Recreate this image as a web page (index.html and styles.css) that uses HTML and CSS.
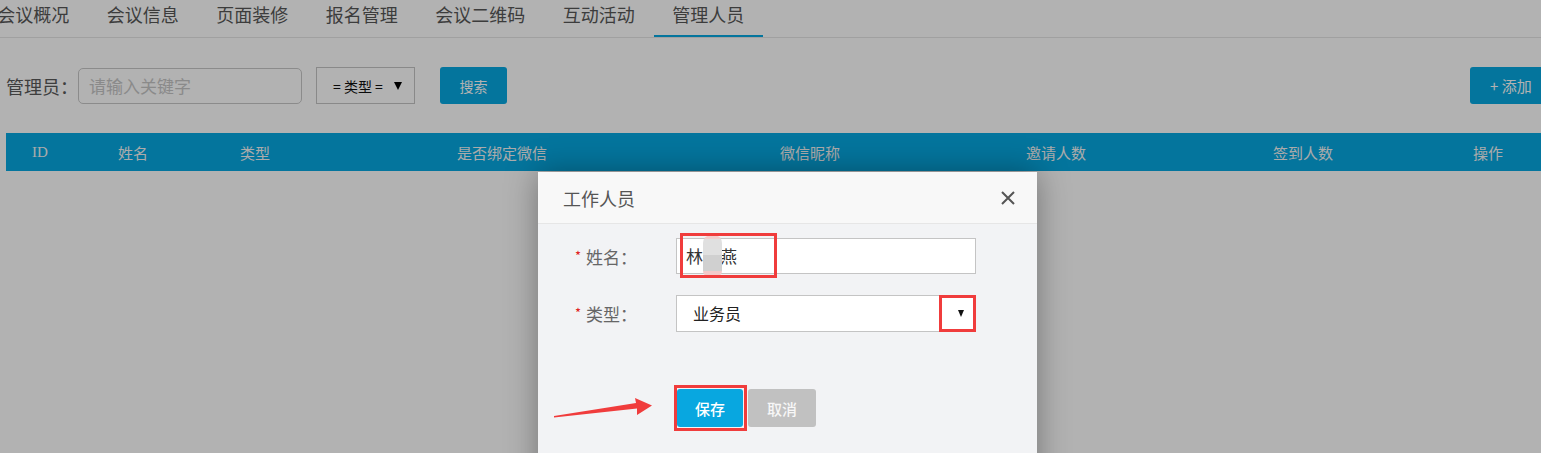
FILE: index.html
```html
<!DOCTYPE html>
<html lang="zh-CN">
<head>
<meta charset="utf-8">
<title>管理人员</title>
<link rel="stylesheet" href="styles.css">
</head>
<body>
<div class="page">
  <div class="tabbar">
    <nav class="tabs">
      <span class="tab">会议概况</span>
      <span class="tab">会议信息</span>
      <span class="tab">页面装修</span>
      <span class="tab">报名管理</span>
      <span class="tab">会议二维码</span>
      <span class="tab">互动活动</span>
      <span class="tab active">管理人员</span>
    </nav>
  </div>
  <div class="toolbar">
    <span class="tb-label">管理员：</span>
    <div class="tb-input">请输入关键字</div>
    <div class="tb-select">= 类型 = <span class="tb-caret"></span></div>
    <button class="btn-search">搜索</button>
    <button class="btn-add">+ 添加</button>
  </div>
  <div class="thead">
    <span class="th-id">ID</span>
    <span>姓名</span>
    <span>类型</span>
    <span>是否绑定微信</span>
    <span>微信昵称</span>
    <span>邀请人数</span>
    <span>签到人数</span>
    <span>操作</span>
  </div>
</div>
<div class="mask"></div>
<div class="modal">
  <div class="modal-head">
    <span class="modal-title">工作人员</span>
    <svg class="modal-close" width="14" height="14" viewBox="0 0 14 14"><path d="M1 1L13 13M13 1L1 13" stroke="#555" stroke-width="2" fill="none"/></svg>
  </div>
  <div class="modal-body">
    <div class="form-row">
      <label class="form-label"><i class="req">*</i>姓名：</label>
      <div class="field field-text">林<span class="gap"></span>燕<span class="blob"></span><span class="mark mark-name"></span></div>
    </div>
    <div class="form-row">
      <label class="form-label"><i class="req">*</i>类型：</label>
      <div class="field field-select">业务员<span class="mark mark-caret"><span class="sel-caret"></span></span></div>
    </div>
    <div class="actions">
      <span class="save-mark"><button class="btn-save">保存</button></span>
      <button class="btn-cancel">取消</button>
    </div>
  </div>
</div>
<svg class="pointer" width="106" height="28" viewBox="0 0 106 28"><polygon points="4,23 86,10 85,5 102,12.5 87,22 87,15.5 4,24.5" fill="#f03c3c"/></svg>
</body>
</html>
```
FILE: styles.css
```css
html, body {
  margin: 0;
  padding: 0;
  overflow: hidden;
}
body {
  width: 1541px;
  height: 453px;
  position: relative;
  background: #ffffff;
  font-family: "Noto Sans CJK SC", "Noto Sans", sans-serif;
}
.page {
  width: 1550px;
}
.tabbar {
  border-bottom: 1px solid #e5e5e5;
  height: 37px;
}
.tabs {
  display: flex;
  margin-left: -21.5px;
}
.tab {
  box-sizing: border-box;
  height: 37px;
  padding: 0 18.75px;
  font-size: 18px;
  line-height: 28px;
  color: #575757;
  white-space: nowrap;
}
.tab.active {
  border-bottom: 2px solid #06a8e1;
}
.toolbar {
  display: flex;
  align-items: center;
  height: 37px;
  margin: 29px 0 0 6px;
}
.tb-label {
  width: 72px;
  font-size: 18px;
  color: #5a5a5a;
  white-space: nowrap;
}
.tb-input {
  box-sizing: border-box;
  width: 224px;
  height: 36px;
  border: 1px solid #c8c8c8;
  border-radius: 5px;
  padding-left: 10px;
  font-size: 17px;
  line-height: 34px;
  color: #c6c6c6;
}
.tb-select {
  box-sizing: border-box;
  display: flex;
  align-items: center;
  width: 99px;
  height: 37px;
  margin-left: 14px;
  padding-left: 16px;
  border: 1px solid #c4c4c4;
  font-size: 14px;
  color: #111;
  white-space: pre;
}
.tb-caret {
  width: 0;
  height: 0;
  margin-left: 8px;
  border-left: 4px solid transparent;
  border-right: 4px solid transparent;
  border-top: 8px solid #000;
}
.btn-search,
.btn-add {
  height: 37px;
  border: none;
  border-radius: 3px;
  background: #06a8e1;
  color: #ffffff;
  font-family: inherit;
  padding: 0;
}
.btn-search {
  width: 67px;
  margin-left: 25px;
  font-size: 14px;
}
.btn-add {
  width: 80px;
  margin-left: auto;
  font-size: 15px;
  text-align: left;
  padding-left: 20px;
}
.thead {
  display: grid;
  grid-template-columns: 86px 122px 217px 323px 246px 247px 200px 1fr;
  align-items: center;
  height: 38px;
  margin: 29px 0 0 6px;
  padding-left: 26px;
  background: #06a8e1;
  font-family: "Liberation Serif", "Noto Sans CJK SC", serif;
  font-size: 15px;
  color: #f5f5f5;
}
.mask {
  position: absolute;
  inset: 0;
  background: rgba(0, 0, 0, 0.3);
}
.modal {
  position: absolute;
  left: 538px;
  top: 172px;
  width: 499px;
  height: 320px;
  background: #f2f3f5;
  box-shadow: 0 0 30px rgba(0, 0, 0, 0.35);
}
.modal-head {
  box-sizing: border-box;
  height: 52px;
  display: flex;
  align-items: center;
  justify-content: space-between;
  padding: 0 22px 0 25px;
  background: #f8f8f8;
  border-bottom: 1px solid #e6e6e6;
}
.modal-title {
  font-size: 18px;
  color: #555;
}
.modal-close {
  display: block;
}
.modal-body {
  padding: 14px 0 0 37px;
}
.form-row {
  display: flex;
  align-items: center;
  height: 36px;
  margin-bottom: 21px;
}
.form-label {
  width: 101px;
  font-size: 17px;
  color: #666;
  white-space: nowrap;
}
.req {
  display: inline-block;
  width: 11px;
  font-style: normal;
  font-size: 13px;
  color: #e02020;
  vertical-align: 3px;
}
.field {
  position: relative;
  box-sizing: border-box;
  width: 300px;
  height: 36px;
  background: #ffffff;
  border: 1px solid #c4c4c4;
  line-height: 34px;
}
.field-text {
  padding-left: 9px;
  font-size: 17px;
  color: #333;
}
.field-select {
  height: 37px;
  padding-left: 16px;
  font-size: 16px;
  color: #222;
}
.gap {
  display: inline-block;
  width: 17px;
}
.blob {
  position: absolute;
  left: 26px;
  top: -4px;
  width: 19px;
  height: 42px;
  border-radius: 8px 8px 6px 6px;
  background: linear-gradient(#f3cccc 0 4px, #e0e0e0 4px 48%, #d0d0d0 48% calc(100% - 6px), #f3caca calc(100% - 6px));
}
.mark {
  position: absolute;
  box-sizing: border-box;
  border: 3px solid #f03c3c;
}
.mark-name {
  left: 3px;
  top: -6px;
  width: 97px;
  height: 45px;
}
.mark-caret {
  right: -1px;
  top: -1px;
  width: 37px;
  height: 37px;
  display: flex;
  align-items: center;
  justify-content: center;
}
.sel-caret {
  width: 0;
  height: 0;
  margin-left: 7px;
  border-left: 3.5px solid transparent;
  border-right: 3.5px solid transparent;
  border-top: 7px solid #111;
}
.actions {
  display: flex;
  align-items: center;
  gap: 1px;
  margin-top: 54px;
  padding-left: 99px;
}
.save-mark {
  display: flex;
  border: 3px solid #f03c3c;
  padding: 1px 1px 1px 0;
}
.btn-save,
.btn-cancel {
  height: 38px;
  border: none;
  border-radius: 3px;
  padding: 0;
  font-family: inherit;
  font-size: 15px;
  font-weight: 500;
}
.btn-save {
  width: 66px;
  background: #08a7e0;
  color: #ffffff;
}
.btn-cancel {
  width: 68px;
  background: #c1c1c1;
  color: #f7f7f7;
}
.pointer {
  position: absolute;
  left: 550px;
  top: 393px;
}
```
